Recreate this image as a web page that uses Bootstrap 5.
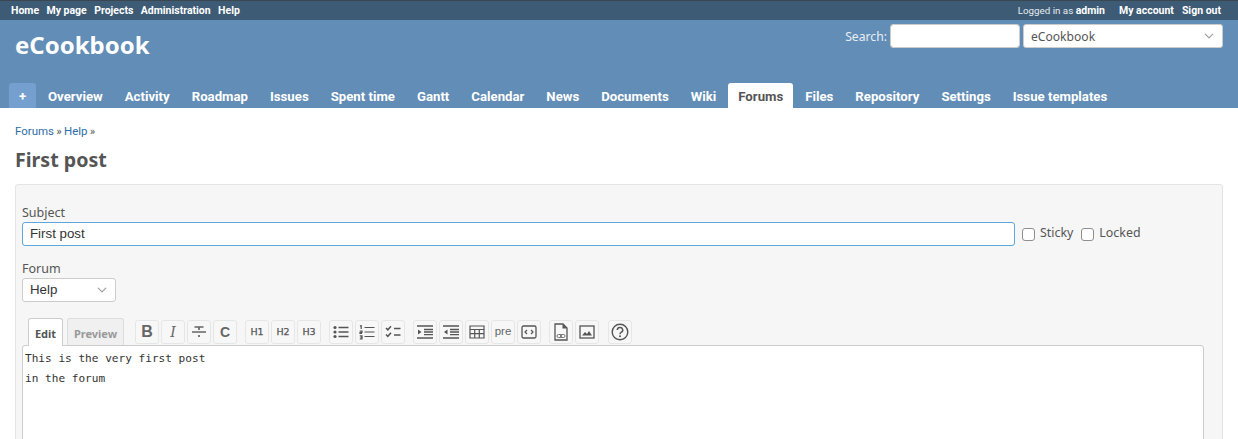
<!DOCTYPE html>
<html lang="en">
<head>
<meta charset="utf-8">
<title>First post</title>
<link href="https://cdn.jsdelivr.net/npm/bootstrap@5.3.0/dist/css/bootstrap.min.css" rel="stylesheet">
<style>
html,body{height:439px;overflow:hidden}
body{font-family:"Roboto","Noto Sans",sans-serif;font-size:12px;color:#555;background:#fff}
a{text-decoration:none}
.topbar{height:20px;background:#3e5b76;border-top:1px solid #3a4650;padding:0 17px 0 11px;font-size:10.5px;font-weight:700;line-height:19px;color:#fff}
.topbar a{color:#fff}
.topbar .lft a{margin-right:7.4px}
.topbar .rgt a{margin-left:8px}
.topbar .who{font-weight:400;font-size:9.8px;color:#e6ecf2;margin-right:6px}
.topbar .who b{color:#fff;font-size:10.5px}
.head{height:88px;background:#628db6;position:relative}
.site-title{font-family:"Noto Sans",sans-serif;font-size:24px;font-weight:700;color:#fff;line-height:34px;padding:8px 0 0 15px;margin:0}
.quick{padding:4px 15px 0 0;color:#e8eef4;font-size:12.2px;font-family:"Noto Sans",sans-serif;align-self:flex-start}
.quick span{padding-top:2px}
.quick .form-control{width:130px;height:24px;padding:0 8px;font-size:12px;margin-left:3px;border-color:#ccc;border-radius:3px}
.quick .form-select,.fsel{background-image:url("data:image/svg+xml,%3csvg xmlns='http://www.w3.org/2000/svg' viewBox='0 0 16 16'%3e%3cpath fill='none' stroke='%23a0a0a0' stroke-linecap='round' stroke-linejoin='round' stroke-width='2' d='m2 5 6 6 6-6'/%3e%3c/svg%3e")}
.quick .form-select{width:200px;height:24px;padding:2px 7px 0;margin-left:3px;font-size:12.1px;color:#555;border-radius:3px;border-color:#ccc;font-family:"Noto Sans",sans-serif;background-size:12px 10px;background-position:right 7px center}
.main-tabs{padding-left:9px;gap:2px;position:absolute;left:0;right:0;bottom:0;height:25px;flex-wrap:nowrap}
.main-tabs a{display:block;height:25px;padding:0 10px;line-height:27px;font-size:13.2px;font-weight:700;color:#fff;white-space:nowrap}
.main-tabs a.plus{background:#759fcf;width:27px;padding:0;text-align:center;border-radius:3px 3px 0 0}
.main-tabs a.on{background:#fff;color:#555;border-radius:3px 3px 0 0}
.page-body{padding:15px 15px 0}
.crumbs{font-size:11.5px;line-height:16px;margin:0;word-spacing:-.6px}
.crumbs a{color:#2f6ea5}
.ptitle{font-size:19.6px;font-weight:700;color:#555;line-height:26px;margin:8px 0 11px;font-family:"Noto Sans",sans-serif}
.panel{background:#f6f6f6;border:1px solid #e4e4e4;border-radius:3px;padding:21px 6px 0;height:400px;font-family:"Noto Sans",sans-serif}
.lbl{display:block;font-size:12.5px;line-height:14px;margin:0 0 2px;color:#555}
.subj{width:993px;height:24px;font-family:"Liberation Sans",sans-serif;font-size:13.3px;padding:0 7px 1px;border-color:#5ca8dd;border-radius:3px;color:#333}
.subj:focus{border-color:#5ca8dd;box-shadow:none}
.chk{margin:0 0 0 7px;width:13px;height:13px;border:1px solid #8f8f8f;border-radius:2.5px;background-color:#fff;flex:none}
.chk+label{margin-left:5px;font-size:12.4px;color:#555;padding-bottom:2px}
.chk-next{margin-left:8px}
.fsel{width:94px;height:24px;padding:0 7px;font-family:"Liberation Sans",sans-serif;font-size:13.3px;color:#333;border-color:#ccc;border-radius:3px;background-size:12px 10px;background-position:right 7px center}
.editor{margin:0 19px 0 0}
.tabrow{height:27px;padding-left:6px;margin-top:16px}
.etab{display:block;height:28px;line-height:30px;text-align:center;font-size:11px;font-weight:700;border:1px solid #ccc;border-bottom:0;border-radius:3px 3px 0 0;color:#555;position:relative;z-index:1}
.etab.one{width:35px;background:#fff}
.etab.two{width:57px;margin-left:4px;background:#f0f0f0;color:#999;border-color:#ddd;height:27px}
.tools{margin-left:11px;padding-top:2px}
.tbtn{width:24px;height:24px;margin-right:2px;padding:0;border:1px solid #e6e6e6;border-radius:3px;background:#f7f7f7;display:flex;align-items:center;justify-content:center;color:#666;font-family:"Liberation Sans",sans-serif;font-size:11px;line-height:1}
.tbtn svg{display:block}
.tgap{margin-right:8px}
.tgap2{margin-right:9px}
.tb-b{font-size:16px;font-weight:700}
.tb-i{font-family:"DejaVu Serif",serif;font-size:14px;font-style:italic;font-weight:400}
.tb-c{font-size:14px;font-weight:700}
.tb-h{font-family:"DejaVu Sans",sans-serif;font-size:9.5px;font-weight:400;color:#555;-webkit-text-stroke:.25px #555}
.tb-p{font-size:11.5px;color:#666}
.etext{display:block;width:1182px;height:200px;border:1px solid #ccc;border-radius:3px;background:#fff;padding:3px 2px;font-family:"DejaVu Sans Mono",monospace;font-size:11.1px;line-height:20px;color:#333;resize:none}
</style>
</head>
<body>
<div class="topbar d-flex justify-content-between">
  <div class="lft"><a href="#">Home</a><a href="#">My page</a><a href="#">Projects</a><a href="#">Administration</a><a href="#">Help</a></div>
  <div class="rgt"><span class="who">Logged in as <b>admin</b></span><a href="#">My account</a><a href="#">Sign out</a></div>
</div>
<div class="head">
  <div class="d-flex justify-content-between">
    <h1 class="site-title">eCookbook</h1>
    <form class="quick d-flex align-items-center">
      <span>Search:</span>
      <input class="form-control" type="text" aria-label="Search">
      <select class="form-select" aria-label="Project"><option>eCookbook</option></select>
    </form>
  </div>
  <nav class="main-tabs d-flex">
    <a class="plus" href="#">+</a><a href="#">Overview</a><a href="#">Activity</a><a href="#">Roadmap</a><a href="#">Issues</a><a href="#">Spent time</a><a href="#">Gantt</a><a href="#">Calendar</a><a href="#">News</a><a href="#">Documents</a><a href="#">Wiki</a><a class="on" href="#">Forums</a><a href="#">Files</a><a href="#">Repository</a><a href="#">Settings</a><a href="#">Issue templates</a>
  </nav>
</div>
<div class="page-body">
  <p class="crumbs"><a href="#">Forums</a> » <a href="#">Help</a> »</p>
  <h2 class="ptitle">First post</h2>
  <div class="panel">
    <label class="lbl" for="s">Subject</label>
    <div class="d-flex align-items-center">
      <input id="s" class="form-control subj" type="text" value="First post">
      <input id="st" class="form-check-input chk mt-0" type="checkbox"><label for="st">Sticky</label>
      <input id="lk" class="form-check-input chk chk-next mt-0" type="checkbox"><label for="lk">Locked</label>
    </div>
    <label class="lbl mt-3" for="f">Forum</label>
    <select id="f" class="form-select fsel"><option>Help</option></select>
    <div class="editor">
      <div class="tabrow d-flex">
        <a class="etab one" href="#">Edit</a>
        <a class="etab two" href="#">Preview</a>
        <div class="tools d-flex">
          <button class="tbtn tb-b" type="button">B</button>
          <button class="tbtn tb-i" type="button">I</button>
          <button class="tbtn" type="button" aria-label="Strike"><svg width="16" height="14" viewBox="0 0 16 14"><path d="M1 7h14M3.500 2h9M8 2v3M8 10v2" stroke="#666" stroke-width="1.700" fill="none"/></svg></button>
          <button class="tbtn tb-c tgap" type="button">C</button>
          <button class="tbtn tb-h" type="button">H1</button>
          <button class="tbtn tb-h" type="button">H2</button>
          <button class="tbtn tb-h tgap" type="button">H3</button>
          <button class="tbtn" type="button" aria-label="Bulleted list"><svg width="16" height="14" viewBox="0 0 16 14"><g fill="#555"><circle cx="2" cy="2.500" r="1.600"/><circle cx="2" cy="7" r="1.600"/><circle cx="2" cy="11.500" r="1.600"/><path d="M5.500 1.700h10v1.500h-10zM5.500 6.200h10v1.500h-10zM5.500 10.700h10v1.500h-10z"/></g></svg></button>
          <button class="tbtn" type="button" aria-label="Numbered list"><svg width="16" height="15" viewBox="0 0 16 15"><path d="M1 1.200l1.200-.7v3.500M.8 6h2.200v1.300H1v1.200h2M.8 10.800h2.200v3H.8M1.500 12.300H3M5.500 2.500h10M5.500 7h10M5.500 11.500h10" stroke="#555" stroke-width="1.200" fill="none"/></svg></button>
          <button class="tbtn tgap" type="button" aria-label="Task list"><svg width="16" height="14" viewBox="0 0 16 14"><path d="M1 3l1.800 1.800L6 1.200M1 9.500l1.800 1.800L6 7.700M9 3.500h6.500M9 10h6.500" stroke="#555" stroke-width="1.500" fill="none"/></svg></button>
          <button class="tbtn" type="button" aria-label="Indent"><svg width="16" height="14" viewBox="0 0 16 14"><path d="M0 1h16M7 4.500h9M7 7h9M7 9.700h9M0 13h16" stroke="#555" stroke-width="1.300" fill="none"/><path d="M1 4.500L4.500 7 1 9.500z" fill="#555"/></svg></button>
          <button class="tbtn" type="button" aria-label="Outdent"><svg width="16" height="14" viewBox="0 0 16 14"><path d="M0 1h16M7 4.500h9M7 7h9M7 9.700h9M0 13h16" stroke="#555" stroke-width="1.300" fill="none"/><path d="M4.500 4.500L1 7l3.500 2.500z" fill="#555"/></svg></button>
          <button class="tbtn" type="button" aria-label="Table"><svg width="16" height="14" viewBox="0 0 16 14"><path d="M1 1h14v12H1zM1 4.500h14M1 8.700h14M5.700 4.500V13M10.300 4.500V13" stroke="#555" stroke-width="1.200" fill="none"/></svg></button>
          <button class="tbtn tb-p" type="button">pre</button>
          <button class="tbtn tgap" type="button" aria-label="Code block"><svg width="16" height="14" viewBox="0 0 16 14"><rect x="1" y="1" width="14" height="12" rx="1.500" stroke="#555" stroke-width="1.300" fill="none"/><path d="M6 5L4 7l2 2M10 5l2 2-2 2" stroke="#555" stroke-width="1.200" fill="none"/></svg></button>
          <button class="tbtn" type="button" aria-label="Link"><svg width="14" height="18" viewBox="0 0 14 18"><path d="M1 1h8l4 4v12H1z" stroke="#555" stroke-width="1.300" fill="none"/><path d="M8.500 1v4.500H13z" fill="#555"/><rect x="3" y="11.500" width="4.500" height="3" rx="1.500" stroke="#555" stroke-width=".8" fill="none"/><rect x="6.500" y="11.500" width="4.500" height="3" rx="1.500" stroke="#555" stroke-width=".8" fill="none"/></svg></button>
          <button class="tbtn tgap2" type="button" aria-label="Image"><svg width="16" height="14" viewBox="0 0 16 14"><rect x="1" y="1" width="14" height="12" stroke="#555" stroke-width="1.300" fill="none"/><path d="M3 10.500l3-3.500 2 2 2-3 3 4.500z" fill="#555"/></svg></button>
          <button class="tbtn" type="button" aria-label="Help"><svg width="18" height="18" viewBox="0 0 18 18"><circle cx="9" cy="9" r="7.800" stroke="#555" stroke-width="1.400" fill="none"/><path d="M6.300 7a2.700 2.500 0 1 1 4 2.200c-.9.500-1.300 1-1.300 2" stroke="#555" stroke-width="1.500" fill="none"/><circle cx="9" cy="13.300" r="1" fill="#555"/></svg></button>
        </div>
      </div>
      <textarea class="etext" aria-label="Message">This is the very first post
in the forum</textarea>
    </div>
  </div>
</div>
</body>
</html>
